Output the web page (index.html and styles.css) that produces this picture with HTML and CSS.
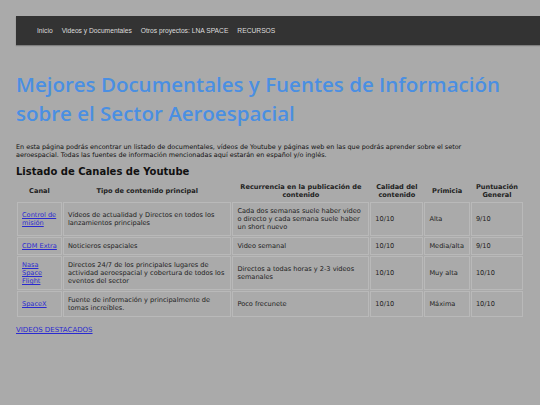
FILE: index.html
```html
<!DOCTYPE html>
<html lang="es">
<head>
    <meta charset="UTF-8">
    <meta name="viewport" content="width=device-width, initial-scale=1.0">
    <title>Mejores Documentales - Sector Aeroespacial</title>
    <link rel="stylesheet" href="styles.css">
</head>
<body>
    <!-- Barra de navegacion -->
    <nav class="topnav">
        <a href="#">Inicio</a>
        <a href="#">Videos y Documentales</a>
        <a href="#">Otros proyectos: LNA SPACE</a>
        <a href="#">RECURSOS</a>
    </nav>

    <div class="content">
        <h1>Mejores Documentales y Fuentes de Información sobre el Sector Aeroespacial</h1>

        <p class="intro">En esta página podrás encontrar un listado de documentales, vídeos de Youtube y páginas web en las que podrás aprender sobre el setor aeroespacial. Todas las fuentes de información mencionadas aquí estarán en español y/o inglés.</p>

        <h2>Listado de Canales de Youtube</h2>

        <table class="channels">
            <tr>
                <th class="c1">Canal</th>
                <th class="c2">Tipo de contenido principal</th>
                <th class="c3">Recurrencia en la publicación de contenido</th>
                <th class="c4">Calidad del contenido</th>
                <th class="c5">Primicia</th>
                <th class="c6">Puntuación General</th>
            </tr>
            <tr>
                <td><a href="#">Control de misión</a></td>
                <td>Vídeos de actualidad y Directos en todos los lanzamientos principales</td>
                <td>Cada dos semanas suele haber video o directo y cada semana suele haber un short nuevo</td>
                <td>10/10</td>
                <td>Alta</td>
                <td>9/10</td>
            </tr>
            <tr>
                <td><a href="#">CDM Extra</a></td>
                <td>Noticieros espaciales</td>
                <td>Video semanal</td>
                <td>10/10</td>
                <td>Media/alta</td>
                <td>9/10</td>
            </tr>
            <tr>
                <td><a href="#">Nasa Space Flight</a></td>
                <td>Directos 24/7 de los principales lugares de actividad aeroespacial y cobertura de todos los eventos del sector</td>
                <td>Directos a todas horas y 2-3 videos semanales</td>
                <td>10/10</td>
                <td>Muy alta</td>
                <td>10/10</td>
            </tr>
            <tr>
                <td><a href="#">SpaceX</a></td>
                <td>Fuente de información y principalmente de tomas increíbles.</td>
                <td>Poco frecunete</td>
                <td>10/10</td>
                <td>Máxima</td>
                <td>10/10</td>
            </tr>
        </table>

        <p class="more"><a href="#">VIDEOS DESTACADOS</a></p>
    </div>
</body>
</html>
```

FILE: styles.css
```css
body {
    margin: 0;
    padding: 16px 0 0 16px;
    background-color: #aaaaaa;
    font-family: "DejaVu Sans", Verdana, sans-serif;
    color: #222;
}
.topnav {
    display: flex;
    gap: 9px;
    align-items: center;
    height: 29px;
    padding-left: 21px;
    background-color: #333333;
    box-shadow: 0 1px 1px rgba(0, 0, 0, 0.25);
}
.topnav a {
    font-family: "Liberation Sans", Arial, sans-serif;
    font-size: 6.7px;
    color: #dddddd;
    text-decoration: none;
}
.content {
    padding-right: 16px;
}
h1 {
    margin: 25px 0 0 0;
    font-family: "Open Sans", sans-serif;
    font-size: 20.5px;
    font-weight: 600;
    line-height: 29px;
    color: #4a8fe2;
}
.intro {
    max-width: 470px;
    margin: 15px 0 0 0;
    font-size: 6.45px;
    line-height: 8px;
    color: #111;
}
h2 {
    margin: 7px 0 3px 0;
    font-size: 10px;
    color: #111;
}
.channels {
    border-collapse: separate;
    border-spacing: 1px;
    width: 508px;
    font-size: 6.6px;
    color: #222;
}
.channels th {
    font-weight: bold;
    padding: 2px 3px;
    line-height: 8px;
}
.channels td {
    border: 1px solid #b9b9b9;
    padding: 4px 4px;
    line-height: 8px;
    text-align: left;
}
.channels a {
    color: #2a2ad0;
}
.c1 { width: 38px; }
.c2 { width: 159px; }
.c3 { width: 128px; }
.c4 { width: 46px; }
.c5 { width: 38px; }
.c6 { width: 45px; }
.more {
    margin: 8px 0 0 0;
    font-size: 7px;
}
.more a {
    color: #2a2ad0;
}
```
